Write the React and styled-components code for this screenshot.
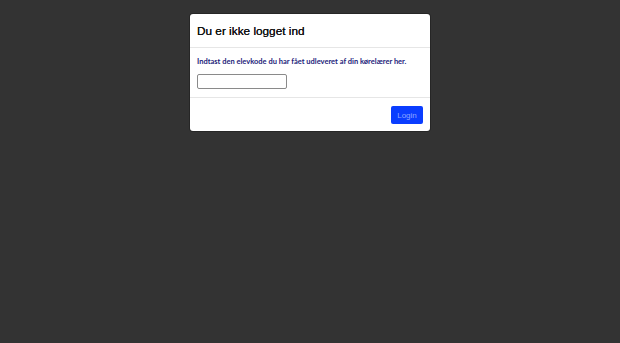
import styled, { createGlobalStyle } from "styled-components";

const GlobalStyle = createGlobalStyle`
  html, body {
    margin: 0;
    padding: 0;
    background: #333333;
    height: 100%;
  }
  body {
    font-family: "Liberation Sans", Arial, sans-serif;
  }
`;

const Page = styled.div`
  min-height: 343px;
  display: flex;
  justify-content: center;
  align-items: flex-start;
  padding-top: 14px;
  box-sizing: border-box;
`;

const Modal = styled.div`
  width: 240px;
  background: #ffffff;
  border-radius: 3px;
  box-shadow: 0 0 0 1px rgba(0, 0, 0, 0.25);
  display: flex;
  flex-direction: column;
`;

const Header = styled.div`
  height: 33px;
  padding: 0 7px;
  display: flex;
  align-items: center;
  border-bottom: 1px solid #e6e6e6;
`;

const Title = styled.h4`
  margin: 0;
  font-size: 11.8px;
  font-weight: 400;
  color: #111111;
  text-shadow: 0 0 0.3px #111111;
`;

const Body = styled.div`
  padding: 9px 7px 8px;
  display: flex;
  flex-direction: column;
  gap: 8px;
  border-bottom: 1px solid #e6e6e6;
`;

const Hint = styled.div`
  font-family: Lato, "Liberation Sans", sans-serif;
  font-weight: 700;
  font-size: 7.5px;
  color: #1c1c7a;
`;

const Input = styled.input`
  width: 90px;
  height: 15px;
  box-sizing: border-box;
  border: 1.5px solid #8a8a8a;
  border-radius: 2px;
  padding: 0 3px;
  margin: 0;
`;

const Footer = styled.div`
  padding: 8px 7px 7px;
  display: flex;
  justify-content: flex-end;
`;

const Button = styled.button`
  width: 32px;
  height: 18px;
  padding: 0;
  border: none;
  border-radius: 2px;
  background: #0a3dff;
  color: #8fa6ff;
  font-family: "Liberation Sans", Arial, sans-serif;
  font-size: 8px;
`;

export default function App() {
  return (
    <>
      <GlobalStyle />
      <Page>
        <Modal>
          <Header>
            <Title>Du er ikke logget ind</Title>
          </Header>
          <Body>
            <Hint>Indtast den elevkode du har fået udleveret af din kørelærer her.</Hint>
            <Input type="text" />
          </Body>
          <Footer>
            <Button>Login</Button>
          </Footer>
        </Modal>
      </Page>
    </>
  );
}
